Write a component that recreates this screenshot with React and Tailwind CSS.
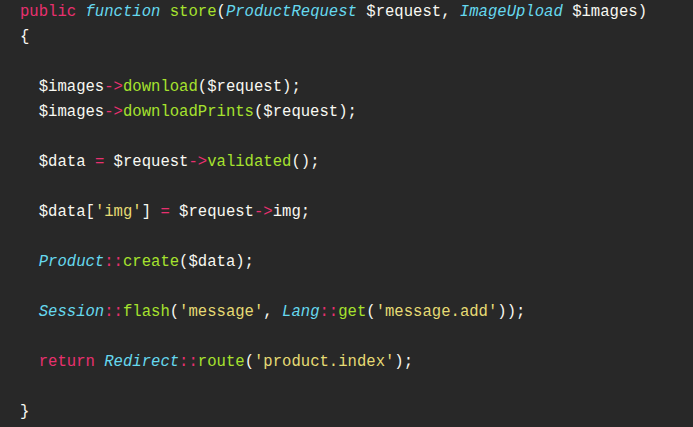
import React from "react";

const K = ({ children }) => <span className="text-[#e8306f]">{children}</span>;
const T = ({ children }) => <span className="italic text-[#66d9ef]">{children}</span>;
const F = ({ children }) => <span className="text-[#a6e22e]">{children}</span>;
const S = ({ children }) => <span className="text-[#e6db74]">{children}</span>;

const lines = [
  <>
    <K>public</K> <T>function</T> <F>store</F>(<T>ProductRequest</T> $request, <T>ImageUpload</T> $images)
  </>,
  <>{"{"}</>,
  null,
  <>
    {"  "}$images<K>-&gt;</K><F>download</F>($request);
  </>,
  <>
    {"  "}$images<K>-&gt;</K><F>downloadPrints</F>($request);
  </>,
  null,
  <>
    {"  "}$data <K>=</K> $request<K>-&gt;</K><F>validated</F>();
  </>,
  null,
  <>
    {"  "}$data[<S>'img'</S>] <K>=</K> $request<K>-&gt;</K>img;
  </>,
  null,
  <>
    {"  "}<T>Product</T><K>::</K><F>create</F>($data);
  </>,
  null,
  <>
    {"  "}<T>Session</T><K>::</K><F>flash</F>(<S>'message'</S>, <T>Lang</T><K>::</K><F>get</F>(<S>'message.add'</S>));
  </>,
  null,
  <>
    {"  "}<K>return</K> <T>Redirect</T><K>::</K><F>route</F>(<S>'product.index'</S>);
  </>,
  null,
  <>{"}"}</>,
];

export default function App() {
  return (
    <div className="w-[693px] h-[427px] bg-[#282828] overflow-hidden">
      <pre className="pl-[20px] pt-0 font-['Liberation_Mono',monospace] text-[15.6px] leading-[25px] text-[#f8f8f2]">
        {lines.map((l, i) => (
          <div key={i} className="h-[25px]">
            {l}
          </div>
        ))}
      </pre>
    </div>
  );
}
